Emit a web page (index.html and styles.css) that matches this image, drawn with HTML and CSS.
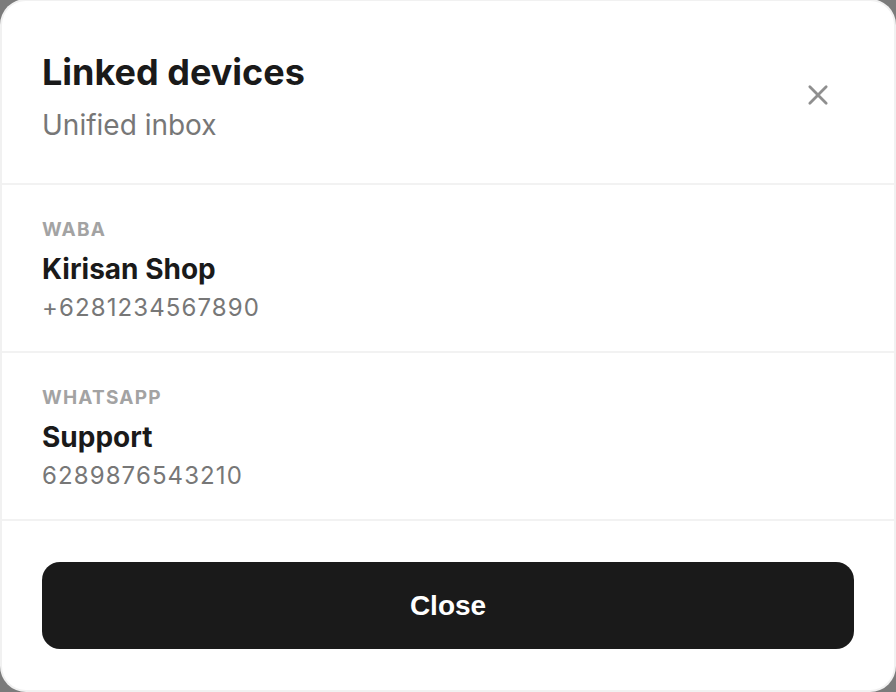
FILE: index.html
```html
<!DOCTYPE html>
<html lang="en">
<head>
    <meta charset="UTF-8">
    <meta name="viewport" content="width=device-width, initial-scale=1.0">
    <title>Linked devices</title>
    <link rel="stylesheet" href="styles.css">
</head>
<body>
    <div class="modal">
        <div class="modal-header">
            <div class="heading">
                <h1 class="title">Linked devices</h1>
                <div class="subtitle">Unified inbox</div>
            </div>
            <button class="icon-close" aria-label="Close">
                <svg width="28" height="28" viewBox="0 0 24 24" fill="none" stroke="currentColor" stroke-width="2.4" stroke-linecap="round">
                    <path d="M5 5l14 14M19 5L5 19"/>
                </svg>
            </button>
        </div>
        <div class="device">
            <div class="device-type">WABA</div>
            <div class="device-name">Kirisan Shop</div>
            <div class="device-number">+6281234567890</div>
        </div>
        <div class="device">
            <div class="device-type">WHATSAPP</div>
            <div class="device-name">Support</div>
            <div class="device-number">6289876543210</div>
        </div>
        <div class="modal-footer">
            <button class="btn-close">Close</button>
        </div>
    </div>
</body>
</html>
```

FILE: styles.css
```css
body {
    margin: 0;
    padding: 1px 2px 2px 2px;
    background-color: #7b7b7b;
    font-family: Inter, "Noto Sans", sans-serif;
}
.modal {
    height: 689px;
    background: #fff;
    border-radius: 24px;
    display: flex;
    flex-direction: column;
    box-shadow: 0 0 0 2px #f1f1f1;
}
.modal-header {
    display: flex;
    align-items: center;
    justify-content: space-between;
    padding: 51px 52px 40px 40px;
    border-bottom: 2px solid #f2f2f2;
}
.title {
    margin: 0;
    font-size: 36px;
    font-weight: 700;
    color: #1a1a1a;
    line-height: 40px;
}
.subtitle {
    margin-top: 15px;
    font-size: 28px;
    color: #777;
    line-height: 36px;
}
.icon-close {
    width: 48px;
    height: 48px;
    margin-bottom: 6px;
    border: none;
    background: none;
    color: #8f8f8f;
    padding: 0;
    display: flex;
    align-items: center;
    justify-content: center;
    cursor: pointer;
}
.device {
    padding: 34px 40px 28px 40px;
    border-bottom: 2px solid #f2f2f2;
}
.device-type {
    font-size: 19px;
    font-weight: 700;
    color: #a3a3a3;
    letter-spacing: 1.2px;
    line-height: 22px;
}
.device-name {
    margin-top: 12px;
    font-size: 28px;
    font-weight: 700;
    color: #1a1a1a;
    line-height: 32px;
}
.device-number {
    margin-top: 8px;
    font-size: 24px;
    color: #777;
    letter-spacing: 1.1px;
    line-height: 30px;
}
.modal-footer {
    padding: 41px 40px 40px 40px;
}
.btn-close {
    width: 100%;
    height: 87px;
    border: none;
    border-radius: 18px;
    background: #1a1a1a;
    color: #fff;
    font-family: "Liberation Sans", Arial, sans-serif;
    font-size: 28px;
    font-weight: 700;
    cursor: pointer;
}
```
